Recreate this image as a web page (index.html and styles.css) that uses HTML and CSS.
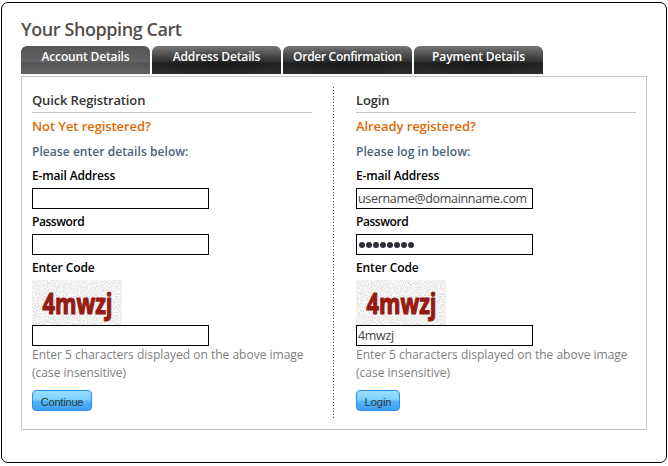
FILE: index.html
```html
<!DOCTYPE html>
<html lang="en">
<head>
<meta charset="utf-8">
<title>Your Shopping Cart</title>
<link rel="stylesheet" href="styles.css">
</head>
<body>
<svg class="defs" width="0" height="0" aria-hidden="true">
  <filter id="grain" x="0" y="0" width="100%" height="100%">
    <feTurbulence type="fractalNoise" baseFrequency="0.9" numOctaves="2" seed="4"/>
    <feColorMatrix type="saturate" values="0"/>
    <feComponentTransfer>
      <feFuncR type="linear" slope="0.9" intercept="0.43"/>
      <feFuncG type="linear" slope="0.9" intercept="0.43"/>
      <feFuncB type="linear" slope="0.9" intercept="0.43"/>
      <feFuncA type="linear" slope="0" intercept="1"/>
    </feComponentTransfer>
  </filter>
</svg>
<main class="cart">
  <h1 class="title">Your Shopping Cart</h1>
  <nav class="tabs">
    <a class="tab active">Account Details</a>
    <a class="tab">Address Details</a>
    <a class="tab">Order Confirmation</a>
    <a class="tab">Payment Details</a>
  </nav>
  <div class="panel">
    <form class="column">
      <h2 class="heading">Quick Registration</h2>
      <p class="question">Not Yet registered?</p>
      <p class="intro">Please enter details below:</p>
      <label class="label address">E-mail Address</label>
      <input class="field" type="text">
      <label class="label password">Password</label>
      <input class="field" type="password">
      <label class="label code">Enter Code</label>
      <svg class="captcha" width="90" height="45" viewBox="0 0 90 45">
        <rect width="90" height="45" filter="url(#grain)"/>
        <text class="captcha-text" x="10.5" y="34" textLength="70" lengthAdjust="spacingAndGlyphs">4mwzj</text>
      </svg>
      <input class="field" type="text">
      <p class="hint">Enter 5 characters displayed on the above image <br>(case insensitive)</p>
      <button class="button continue" type="button">Continue</button>
    </form>
    <div class="divider"></div>
    <form class="column">
      <h2 class="heading">Login</h2>
      <p class="question">Already registered?</p>
      <p class="intro">Please log in below:</p>
      <label class="label address">E-mail Address</label>
      <input class="field email" type="text" value="username@domainname.com">
      <label class="label password">Password</label>
      <div class="field secret"><i></i><i></i><i></i><i></i><i></i><i></i><i></i><i></i></div>
      <label class="label code">Enter Code</label>
      <svg class="captcha" width="90" height="45" viewBox="0 0 90 45">
        <rect width="90" height="45" filter="url(#grain)"/>
        <text class="captcha-text" x="10.5" y="34" textLength="70" lengthAdjust="spacingAndGlyphs">4mwzj</text>
      </svg>
      <input class="field typed" type="text" value="4mwzj">
      <p class="hint">Enter 5 characters displayed on the above image <br>(case insensitive)</p>
      <button class="button login" type="button">Login</button>
    </form>
  </div>
</main>
</body>
</html>
```
FILE: styles.css
```css
* { box-sizing: border-box; }
body {
  margin: 0;
  background: #fff;
  font-family: "Trebuchet MS", "Open Sans", sans-serif;
  font-size: 12px;
  overflow: hidden;
}
.defs { display: block; }
.cart {
  width: 666px;
  height: 461px;
  margin: 2px 0 0 1px;
  padding: 15px 19px 0;
  border: 1px solid #000;
  border-radius: 7px;
}
.title {
  margin: 0;
  height: 28px;
  line-height: 22px;
  font-size: 18px;
  font-weight: 600;
  letter-spacing: -0.42px;
  color: #544f4a;
  white-space: nowrap;
}
.tabs { display: flex; gap: 2px; height: 28px; }
.tab {
  width: 129px;
  height: 28px;
  border-radius: 6px 6px 0 0;
  background:
    radial-gradient(ellipse 60px 16px at 50% 65%, rgba(0,0,0,.3), transparent),
    linear-gradient(#777 0, #4b4b4b 35%, #303030 57%, #222 60%, #2c2c2c);
  color: #fff;
  font-size: 12px;
  font-weight: 600;
  letter-spacing: -0.15px;
  line-height: 22px;
  text-align: center;
  white-space: nowrap;
}
.tab:nth-child(3) { letter-spacing: -0.3px; }
.tab:nth-child(4) { letter-spacing: -0.12px; }
.tab.active { background: linear-gradient(#555 0, #626262 57%, #555 60%, #646464); }
.panel {
  display: flex;
  width: 626px;
  height: 354px;
  margin-top: 2px;
  padding: 10px 10px 0;
  border: 1px solid #c4c4c4;
}
.column { width: 280px; padding-top: 1px; }
.divider {
  width: 1px;
  height: 333px;
  margin: 0 22px 0 21px;
  background: repeating-linear-gradient(#555 0 1px, transparent 1px 3px);
}
.heading {
  margin: 0;
  height: 25px;
  border-bottom: 1px solid #c4c4c4;
  font-size: 13px;
  font-weight: 600;
  letter-spacing: -0.13px;
  line-height: 24px;
  color: #333;
}
.question {
  margin: 0;
  font-size: 13px;
  font-weight: 600;
  letter-spacing: -0.08px;
  line-height: 27px;
  color: #e06a05;
}
.intro {
  margin: 0;
  font-weight: 600;
  letter-spacing: 0.06px;
  line-height: 23px;
  color: #4b5f7e;
}
.label {
  display: block;
  height: 25px;
  line-height: 26px;
  font-weight: 600;
  color: #000;
}
.address { letter-spacing: -0.16px; }
.password { letter-spacing: -0.45px; }
.code { letter-spacing: -0.1px; }
.field {
  display: block;
  width: 177px;
  height: 21px;
  margin: 0;
  padding: 0 1px;
  border: 1px solid #000;
  background: #fff;
  color: #444;
  font: 13px "Trebuchet MS", "Open Sans", sans-serif;
  outline: 0;
}
.email { font-size: 12.5px; letter-spacing: -0.32px; }
.typed { font-size: 12.5px; letter-spacing: -0.3px; }
.secret { display: flex; align-items: center; gap: 1px; padding-left: 2px; }
.secret i { width: 6px; height: 6px; border-radius: 50%; background: #302e38; }
.captcha { display: block; overflow: visible; }
.captcha-text {
  font: 700 29px "Open Sans", sans-serif;
  fill: #951b12;
  stroke: #951b12;
  stroke-width: 1.2px;
  stroke-linejoin: round;
}
.hint {
  margin: 0;
  line-height: 18px;
  color: #808080;
  white-space: nowrap;
}
.button {
  display: block;
  height: 21px;
  margin: 8px 0 0;
  padding: 2px 0 0;
  border: 1px solid #2b8ee8;
  border-radius: 4px;
  background: linear-gradient(#9ce0ff 0, #7bd0ff 45%, #4fb4fb 55%, #3f9ff5);
  color: #263b2b;
  font: 11px "Liberation Sans", sans-serif;
  line-height: 16px;
  text-align: center;
}
.continue { width: 60px; letter-spacing: -0.2px; }
.login { width: 44px; }
```
